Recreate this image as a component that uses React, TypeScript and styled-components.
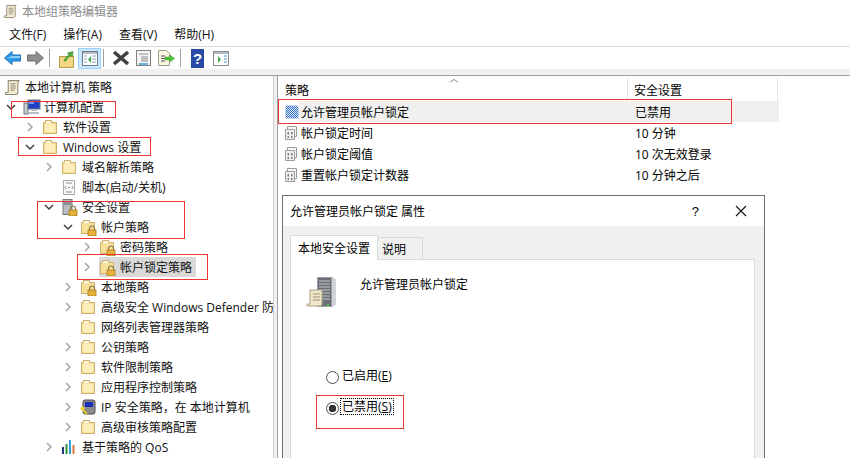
import styled, { createGlobalStyle } from "styled-components";

const GlobalStyle = createGlobalStyle`
  html, body {
    margin: 0;
    padding: 0;
    background: #ffffff;
  }

  body {
    font-family: "Open Sans", "Noto Sans CJK SC", sans-serif;
    font-size: 12px;
    color: #000000;
  }
`;

// ICONS
const Folder = () => (
  <svg width="16" height="16" viewBox="0 0 16 16">
    <path d="M1.500 3.500h2V1.500h6v2h5v11h-13z" fill="#f9e09a" stroke="#cdb06a" />
    <path d="M3 5h10v8H3z" fill="#fdeebb" />
    <path d="M4 2.500h5v1.500H4z" fill="#ffffff" />
  </svg>
);

const Lock = () => (
  <g>
    <path d="M9.500 11V9.500a2.500 2.500 0 0 1 5 0V11" fill="none" stroke="#8a7a50" strokeWidth="1.200" />
    <rect x="8" y="11" width="8" height="6" fill="#e6b23c" stroke="#a87c1c" strokeWidth="0.800" />
  </g>
);

const LockFolder = () => (
  <svg width="17" height="17" viewBox="0 0 17 17">
    <path d="M1.500 3.500h2V1.500h6v2h5v11h-13z" fill="#f9e09a" stroke="#cdb06a" />
    <path d="M4 2.500h5v1.500H4z" fill="#ffffff" />
    <Lock />
  </svg>
);

const Scroll = ({ size = 16 }: { size?: number }) => (
  <svg width={size} height={size} viewBox="0 0 16 16">
    <path d="M4 1.500h10c-1 1-1 2-1 3v8c0 1-1 2-2 2H2c-1 0-1-2 0-2h2z" fill="#f7edd4" stroke="#8f8a78" />
    <path d="M6 4.500h5M6 6.500h5M6 8.500h5M6 10.500h4" stroke="#77705c" strokeWidth="0.800" />
  </svg>
);

const Computer = () => (
  <svg width="18" height="18" viewBox="0 0 18 18">
    <rect x="1" y="5" width="4" height="11" fill="#c9ccd2" stroke="#70747c" />
    <rect x="5" y="2" width="12" height="9" fill="#1f3fc4" stroke="#6d7888" />
    <path d="M6 3h5v3H6z" fill="#6f9cf4" />
    <path d="M8 11h6v2H8zM6 14h10v2H6z" fill="#b8bcc4" />
  </svg>
);

const ScriptPage = () => (
  <svg width="16" height="17" viewBox="0 0 16 17">
    <path d="M2.500 1.500h11v14h-11z" fill="#fafafa" stroke="#a8a8a8" />
    <path d="M5 4h6M5 13h6M5 7l-1 1.500 1 1.500M11 7l1 1.500-1 1.500M7 8.500h2" stroke="#8c8c8c" fill="none" />
  </svg>
);

const SecurityServer = () => (
  <svg width="17" height="17" viewBox="0 0 17 17">
    <rect x="2" y="0.500" width="9" height="15" fill="#b9bdc4" stroke="#74787f" />
    <path d="M3 3h7M3 5h7" stroke="#5d6168" />
    <Lock />
  </svg>
);

const IpSecurity = () => (
  <svg width="17" height="17" viewBox="0 0 17 17">
    <rect x="3" y="1" width="12" height="14" rx="2" fill="#8b8b8b" stroke="#4c4c4c" />
    <rect x="5" y="3" width="8" height="5" fill="#1a2fb8" />
    <path d="M1 9l6 6" stroke="#e8c62a" strokeWidth="2" />
    <circle cx="2.500" cy="9.500" r="2" fill="#f2d83a" />
  </svg>
);

const QosChart = () => (
  <svg width="16" height="16" viewBox="0 0 16 16">
    <path d="M1 8h2v7H1z" fill="#223a7a" />
    <path d="M4.500 5h2v10h-2z" fill="#2e8a3c" />
    <path d="M8 1h2v14H8z" fill="#2f9fd8" />
    <path d="M11.500 6h2v9h-2z" fill="#e8743c" />
  </svg>
);

const PolicyRowIcon = ({ active }: { active?: boolean }) =>
  active ? (
    <svg width="14" height="14" viewBox="0 0 14 14">
      <defs>
        <pattern id="checker" width="2" height="2" patternUnits="userSpaceOnUse">
          <rect width="2" height="2" fill="#dfe8f4" />
          <rect width="1" height="1" fill="#2f6fc4" />
          <rect x="1" y="1" width="1" height="1" fill="#2f6fc4" />
        </pattern>
      </defs>
      <path d="M0.500 0.500h11l2 2v11h-13z" fill="url(#checker)" />
    </svg>
  ) : (
    <svg width="14" height="14" viewBox="0 0 14 14">
      <path d="M2.500 0.500h9v10h-9z" fill="#f6f6f6" stroke="#9c9c9c" />
      <path d="M0.500 3.500h9v10h-9z" fill="#f0f0f0" stroke="#9c9c9c" />
      <path d="M2.500 6h1.500v2.500H2.500zM6 6h1.500v2.500H6zM2.500 10h1.500v2H2.500zM6 10h1.500v2H6z" fill="#7c7c7c" />
    </svg>
  );

const ServerScroll = () => (
  <svg width="32" height="34" viewBox="0 0 32 34">
    <path d="M11 2h15l4 3v24l-4 3H11z" fill="#9a9da2" />
    <path d="M26 2l4 3v24l-4 3z" fill="#d2d4d8" />
    <path d="M12 3h13v28H12z" fill="#6c7076" />
    <path d="M13 6h11M13 9h11M13 12h11M13 15h11M13 18h11M13 21h11M13 24h11" stroke="#c4c6ca" />
    <rect x="21" y="29" width="2" height="2" fill="#45c048" />
    <path d="M4 15h13c-1 1-1 2-1 3v11c0 1-1 2-2 2H2c-2 0-2-2 0-2h2z" fill="#f1e6c8" stroke="#aa9f82" />
    <path d="M7 19h7M7 22h7M7 25h7" stroke="#99917a" />
  </svg>
);

const BackArrow = () => (
  <svg width="17" height="14" viewBox="0 0 17 14">
    <path d="M8 0.500L0.500 7 8 13.500V10h8.500V4H8z" fill="#2f9ae8" stroke="#1c6fb4" />
    <path d="M3 7h13V5H8z" fill="#8fd0f8" />
  </svg>
);

const ForwardArrow = () => (
  <svg width="17" height="14" viewBox="0 0 17 14">
    <path d="M9 0.500L16.500 7 9 13.500V10H0.500V4H9z" fill="#8e8e8e" stroke="#6c6c6c" />
  </svg>
);

const UpFolder = () => (
  <svg width="15" height="19" viewBox="0 0 15 19">
    <path d="M0.500 7.500h14v11h-14z" fill="#f4d684" stroke="#b99a4c" />
    <path d="M5 12c1-3 3-5 5-6l-1.500-2L14 2.500 13.500 8l-1.500-1.500c-2 1-4 3-5 5.500z" fill="#4caf3c" stroke="#2d7d24" strokeWidth="0.500" />
  </svg>
);

const PanePage = () => (
  <svg width="16" height="15" viewBox="0 0 16 15">
    <rect x="0.500" y="0.500" width="15" height="14" fill="#ffffff" stroke="#6c7a8a" />
    <path d="M1 1h14v2H1z" fill="#b4bcc6" />
    <path d="M2 5h3M2 8h3M2 11h3M10 5h4M10 8h4M10 11h4" stroke="#8aa0b8" />
    <path d="M9 5v7L6 8.500z" fill="#3ca850" />
  </svg>
);

const RightPage = () => (
  <svg width="16" height="15" viewBox="0 0 16 15">
    <rect x="0.500" y="0.500" width="15" height="14" fill="#ffffff" stroke="#8c8c8c" />
    <path d="M1 1h14v2H1z" fill="#b4bcc6" />
    <path d="M5 5v7l3-3.500z" fill="#3ca850" />
    <path d="M11 5h3M11 8h3M11 11h3" stroke="#4a90d8" />
  </svg>
);

const DeleteX = () => (
  <svg width="18" height="16" viewBox="0 0 18 16">
    <path d="M2 2l14 12M16 2L2 14" stroke="#404040" strokeWidth="3.600" />
  </svg>
);

const PropertiesPage = () => (
  <svg width="15" height="16" viewBox="0 0 15 16">
    <rect x="0.500" y="0.500" width="14" height="15" fill="#f4f4f4" stroke="#808080" />
    <path d="M3 4h9M5 7h7M5 9h7M5 11h7" stroke="#8c8c8c" />
    <path d="M3 14h9" stroke="#3c9ad8" strokeWidth="1.500" />
  </svg>
);

const ExportPage = () => (
  <svg width="17" height="16" viewBox="0 0 17 16">
    <path d="M0.500 0.500h8l3 3v12H0.500z" fill="#fbf6e0" stroke="#9c9c8c" />
    <path d="M3 6h4M3 8.500h4M3 11h4" stroke="#555555" />
    <path d="M7 7h5V5l4.500 3.500L12 12v-2H7z" fill="#52c43c" stroke="#3a9a2c" strokeWidth="0.500" />
  </svg>
);

const HelpBook = () => (
  <svg width="13" height="19" viewBox="0 0 13 19">
    <rect width="13" height="19" fill="#2a4aa8" />
    <text x="6.500" y="15" textAnchor="middle" fontSize="15" fontWeight="700" fill="#ffffff" fontFamily="Liberation Sans, sans-serif">
      ?
    </text>
  </svg>
);

const Chevron = ({ open }: { open: boolean }) =>
  open ? (
    <svg width="10" height="10" viewBox="0 0 10 10">
      <path d="M1 3l4 4 4-4" fill="none" stroke="#404040" strokeWidth="1.500" />
    </svg>
  ) : (
    <svg width="10" height="10" viewBox="0 0 10 10">
      <path d="M3 1l4 4-4 4" fill="none" stroke="#a6a6a6" strokeWidth="1.500" />
    </svg>
  );

// DATA
type TreeIcon = "scroll" | "computer" | "folder" | "lock" | "script" | "security" | "ip" | "qos";

type TreeItem = {
  label: string;
  depth: number;
  icon: TreeIcon;
  toggle?: "open" | "closed";
  selected?: boolean;
};

const treeItems: TreeItem[] = [
  { label: "本地计算机 策略", depth: 0, icon: "scroll" },
  { label: "计算机配置", depth: 1, icon: "computer", toggle: "open" },
  { label: "软件设置", depth: 2, icon: "folder", toggle: "closed" },
  { label: "Windows 设置", depth: 2, icon: "folder", toggle: "open" },
  { label: "域名解析策略", depth: 3, icon: "folder", toggle: "closed" },
  { label: "脚本(启动/关机)", depth: 3, icon: "script" },
  { label: "安全设置", depth: 3, icon: "security", toggle: "open" },
  { label: "帐户策略", depth: 4, icon: "lock", toggle: "open" },
  { label: "密码策略", depth: 5, icon: "lock", toggle: "closed" },
  { label: "帐户锁定策略", depth: 5, icon: "lock", toggle: "closed", selected: true },
  { label: "本地策略", depth: 4, icon: "lock", toggle: "closed" },
  { label: "高级安全 Windows Defender 防火墙", depth: 4, icon: "folder", toggle: "closed" },
  { label: "网络列表管理器策略", depth: 4, icon: "folder" },
  { label: "公钥策略", depth: 4, icon: "folder", toggle: "closed" },
  { label: "软件限制策略", depth: 4, icon: "folder", toggle: "closed" },
  { label: "应用程序控制策略", depth: 4, icon: "folder", toggle: "closed" },
  { label: "IP 安全策略，在 本地计算机", depth: 4, icon: "ip", toggle: "closed" },
  { label: "高级审核策略配置", depth: 4, icon: "folder", toggle: "closed" },
  { label: "基于策略的 QoS", depth: 3, icon: "qos", toggle: "closed" },
];

const policies = [
  { name: "允许管理员帐户锁定", value: "已禁用", active: true },
  { name: "帐户锁定时间", value: "10 分钟" },
  { name: "帐户锁定阈值", value: "10 次无效登录" },
  { name: "重置帐户锁定计数器", value: "10 分钟之后" },
];

const annotations = [
  { x: 11, y: 101, w: 105, h: 17 },
  { x: 18, y: 137, w: 133, h: 19 },
  { x: 37, y: 201, w: 148, h: 38 },
  { x: 77, y: 254, w: 131, h: 26 },
  { x: 278, y: 99, w: 454, h: 25 },
  { x: 316, y: 395, w: 88, h: 34 },
];

const renderTreeIcon = (icon: TreeIcon) => {
  switch (icon) {
    case "scroll":
      return <Scroll size={17} />;
    case "computer":
      return <Computer />;
    case "lock":
      return <LockFolder />;
    case "script":
      return <ScriptPage />;
    case "security":
      return <SecurityServer />;
    case "ip":
      return <IpSecurity />;
    case "qos":
      return <QosChart />;
    default:
      return <Folder />;
  }
};

const App = () => {
  return (
    <Wrapper>
      <GlobalStyle />
      <TitleBar>
        <Scroll size={15} />
        <TitleText>本地组策略编辑器</TitleText>
      </TitleBar>

      <MenuBar>
        <MenuItem>文件(F)</MenuItem>
        <MenuItem>操作(A)</MenuItem>
        <MenuItem>查看(V)</MenuItem>
        <MenuItem>帮助(H)</MenuItem>
      </MenuBar>

      <Toolbar>
        <ToolButton><BackArrow /></ToolButton>
        <ToolButton><ForwardArrow /></ToolButton>
        <ToolDivider />
        <ToolButton><UpFolder /></ToolButton>
        <ToolButton $active><PanePage /></ToolButton>
        <ToolDivider />
        <ToolButton><DeleteX /></ToolButton>
        <ToolButton><PropertiesPage /></ToolButton>
        <ToolButton><ExportPage /></ToolButton>
        <ToolDivider />
        <ToolButton><HelpBook /></ToolButton>
        <ToolButton><RightPage /></ToolButton>
      </Toolbar>
      <ToolbarEdge />

      <Panes>
        <TreePane>
          {treeItems.map((item) => (
            <TreeRow key={item.label} $depth={item.depth}>
              <Toggle>{item.toggle && <Chevron open={item.toggle === "open"} />}</Toggle>
              <TreeEntry $selected={item.selected}>
                <TreeIconSlot>{renderTreeIcon(item.icon)}</TreeIconSlot>
                <TreeLabel>{item.label}</TreeLabel>
              </TreeEntry>
            </TreeRow>
          ))}
        </TreePane>

        <ListPane>
          <ListHeader>
            <NameHeader>
              策略
              <SortCaret />
            </NameHeader>
            <ValueHeader>安全设置</ValueHeader>
          </ListHeader>
          {policies.map((policy) => (
            <ListRow key={policy.name}>
              <PolicyRowIcon active={policy.active} />
              <ListCells $active={policy.active}>
                <NameCell>{policy.name}</NameCell>
                <ValueCell>{policy.value}</ValueCell>
              </ListCells>
            </ListRow>
          ))}
        </ListPane>
      </Panes>

      <Dialog>
        <DialogTitleBar>
          <DialogTitle>允许管理员帐户锁定 属性</DialogTitle>
          <HelpMark>?</HelpMark>
          <svg width="12" height="12" viewBox="0 0 12 12">
            <path d="M1 1l10 10M11 1L1 11" stroke="#111111" strokeWidth="1.100" />
          </svg>
        </DialogTitleBar>
        <DialogBody>
          <Tabs>
            <Tab $active>本地安全设置</Tab>
            <Tab>说明</Tab>
          </Tabs>
          <TabPanel>
            <PolicyHead>
              <ServerScroll />
              <span>允许管理员帐户锁定</span>
            </PolicyHead>
            <RadioGroup>
              <RadioRow>
                <RadioDot />
                <RadioLabel>已启用(<u>E</u>)</RadioLabel>
              </RadioRow>
              <RadioRow>
                <RadioDot $checked />
                <RadioLabel $focused>已禁用(<u>S</u>)</RadioLabel>
              </RadioRow>
            </RadioGroup>
          </TabPanel>
        </DialogBody>
      </Dialog>

      {annotations.map((box) => (
        <RedBox key={`${box.x}-${box.y}`} $x={box.x} $y={box.y} $w={box.w} $h={box.h} />
      ))}
    </Wrapper>
  );
};

export default App;

const Wrapper = styled.div`
  position: relative;
  width: 850px;
  height: 458px;
  overflow: hidden;
  background: #ffffff;
  display: flex;
  flex-direction: column;
`;

const TitleBar = styled.div`
  height: 22px;
  padding-left: 3px;
  display: flex;
  align-items: center;
  gap: 4px;
  flex-shrink: 0;
`;

const TitleText = styled.span`
  color: #8c8c8c;
`;

const MenuBar = styled.div`
  height: 24px;
  padding-left: 9px;
  display: flex;
  align-items: center;
  gap: 17px;
  flex-shrink: 0;
`;

const MenuItem = styled.span`
  color: #111111;
`;

const Toolbar = styled.div`
  height: 22px;
  padding-left: 1px;
  border-top: 1px solid #d9d9d9;
  display: flex;
  align-items: center;
  flex-shrink: 0;
`;

const ToolButton = styled.div<{ $active?: boolean }>`
  width: 23px;
  height: 21px;
  display: flex;
  align-items: center;
  justify-content: center;
  flex-shrink: 0;
  box-sizing: border-box;
  background: ${({ $active }) => ($active ? "#cce8ff" : "transparent")};
  border: 1px solid ${({ $active }) => ($active ? "#99d1ff" : "transparent")};
`;

const ToolDivider = styled.div`
  width: 1px;
  height: 18px;
  margin: 0 5px 0 2px;
  background: #a0a0a0;
  flex-shrink: 0;
`;

const ToolbarEdge = styled.div`
  height: 6px;
  background: #f0f0f0;
  border-bottom: 1px solid #a0a0a0;
  flex-shrink: 0;
`;

const Panes = styled.div`
  flex: 1;
  min-height: 0;
  display: flex;
  background: #f0f0f0;
`;

const TreePane = styled.div`
  width: 273px;
  padding-top: 1px;
  background: #ffffff;
  border-right: 1px solid #d0d0d0;
  overflow: hidden;
  flex-shrink: 0;
`;

const TreeRow = styled.div<{ $depth: number }>`
  height: 20px;
  padding-left: ${({ $depth }) => 4 + $depth * 19}px;
  display: flex;
  align-items: center;
  white-space: nowrap;
`;

const Toggle = styled.div`
  width: 19px;
  margin-left: -19px;
  padding-left: 2px;
  box-sizing: border-box;
  display: flex;
  align-items: center;
  flex-shrink: 0;
`;

const TreeEntry = styled.div<{ $selected?: boolean }>`
  height: 20px;
  padding-right: ${({ $selected }) => ($selected ? "4px" : "0")};
  display: flex;
  align-items: center;
  background: ${({ $selected }) => ($selected ? "#d9d9d9" : "transparent")};
`;

const TreeIconSlot = styled.div`
  width: 18px;
  margin-right: 3px;
  display: flex;
  align-items: center;
`;

const TreeLabel = styled.span`
  color: #111111;
`;

const ListPane = styled.div`
  flex: 1;
  margin-left: 3px;
  padding-top: 1px;
  background: #ffffff;
  border-left: 1px solid #a0a0a0;
`;

const ListHeader = styled.div`
  height: 24px;
  display: flex;
`;

const NameHeader = styled.div`
  position: relative;
  width: 350px;
  padding: 4px 0 0 7px;
  box-sizing: border-box;
  border-right: 1px solid #e5e5e5;
`;

const SortCaret = styled.span`
  position: absolute;
  top: 2px;
  left: 173px;
  width: 5px;
  height: 5px;
  border-top: 1px solid #8c8c8c;
  border-left: 1px solid #8c8c8c;
  transform: scaleY(0.7) rotate(45deg);
`;

const ValueHeader = styled.div`
  width: 150px;
  padding: 4px 0 0 6px;
  box-sizing: border-box;
  border-right: 1px solid #e5e5e5;
`;

const ListRow = styled.div`
  height: 21px;
  padding-left: 7px;
  display: flex;
  align-items: center;
`;

const ListCells = styled.div<{ $active?: boolean }>`
  width: 480px;
  height: 21px;
  display: flex;
  align-items: center;
  background: ${({ $active }) => ($active ? "#f0f0f0" : "transparent")};
`;

const NameCell = styled.span`
  width: 336px;
  padding-left: 2px;
  box-sizing: border-box;
`;

const ValueCell = styled.span``;

const Dialog = styled.div`
  position: absolute;
  left: 282px;
  top: 195px;
  width: 483px;
  height: 280px;
  box-sizing: border-box;
  background: #ffffff;
  border: 1px solid #707070;
  display: flex;
  flex-direction: column;
`;

const DialogTitleBar = styled.div`
  height: 30px;
  padding: 0 17px 0 7px;
  display: flex;
  align-items: center;
  flex-shrink: 0;
`;

const DialogTitle = styled.span`
  flex: 1;
`;

const HelpMark = styled.span`
  margin-right: 36px;
  font-family: "Liberation Sans", sans-serif;
  font-size: 13px;
`;

const DialogBody = styled.div`
  flex: 1;
  padding: 9px 9px 0 7px;
  background: #f0f0f0;
`;

const Tabs = styled.div`
  display: flex;
  align-items: flex-end;
`;

const Tab = styled.div<{ $active?: boolean }>`
  position: relative;
  height: ${({ $active }) => ($active ? "25px" : "23px")};
  padding: ${({ $active }) => ($active ? "0 7px" : "0 16px 0 4px")};
  display: flex;
  align-items: center;
  background: ${({ $active }) => ($active ? "#ffffff" : "#f0f0f0")};
  border: 1px solid #d9d9d9;
  border-bottom: ${({ $active }) => ($active ? "none" : "1px solid #d9d9d9")};
  border-left: ${({ $active }) => ($active ? "1px solid #d9d9d9" : "none")};
  box-sizing: border-box;
  z-index: ${({ $active }) => ($active ? 1 : 0)};
`;

const TabPanel = styled.div`
  height: 220px;
  margin-top: -1px;
  padding: 15px 0 0 15px;
  box-sizing: border-box;
  background: #ffffff;
  border: 1px solid #d9d9d9;
`;

const PolicyHead = styled.div`
  display: flex;
  gap: 22px;
  line-height: 20px;
`;

const RadioGroup = styled.div`
  margin: 58px 0 0 20px;
  display: flex;
  flex-direction: column;
  gap: 11px;
`;

const RadioRow = styled.div`
  height: 20px;
  display: flex;
  align-items: center;
  gap: 2px;
`;

const RadioDot = styled.span<{ $checked?: boolean }>`
  width: 13px;
  height: 13px;
  box-sizing: border-box;
  border-radius: 50%;
  border: 1px solid #4d4d4d;
  background: ${({ $checked }) =>
    $checked
      ? "radial-gradient(circle, #333333 0 3.5px, #ffffff 4px)"
      : "#ffffff"};
`;

const RadioLabel = styled.span<{ $focused?: boolean }>`
  padding: 0 1px;
  margin-bottom: 3px;
  line-height: 15px;
  outline: ${({ $focused }) => ($focused ? "1px dotted #000000" : "none")};
`;

const RedBox = styled.div<{ $x: number; $y: number; $w: number; $h: number }>`
  position: absolute;
  left: ${({ $x }) => $x}px;
  top: ${({ $y }) => $y}px;
  width: ${({ $w }) => $w}px;
  height: ${({ $h }) => $h}px;
  box-sizing: border-box;
  border: 1px solid #ee3333;
  pointer-events: none;
`;
